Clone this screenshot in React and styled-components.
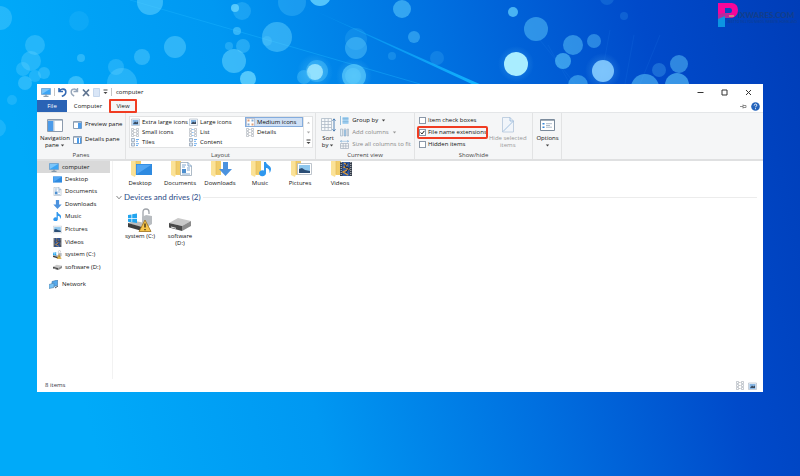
import React, { useState } from "react";
import styled, { createGlobalStyle, css } from "styled-components";

const GlobalStyle = createGlobalStyle`
  *, *::before, *::after { box-sizing: border-box; }
  body { margin: 0; font: 6px/7px "Open Sans", "Noto Sans", sans-serif; color: #111; }
  button, input { font: inherit; color: inherit; margin: 0; }
  button { border: 0; padding: 0; background: none; cursor: pointer; }
  ul { list-style: none; margin: 0; padding: 0; }
  a { color: inherit; text-decoration: none; }
  h1, h2, h3 { margin: 0; font: inherit; }
  svg { display: block; flex: none; }
`;

const Desktop = styled.div`
  position: relative;
  min-height: 100vh;
  padding: 84px 37px;
  display: flex;
  flex-direction: column;
`;
const WallpaperSvg = styled.svg`
  position: absolute;
  inset: 0;
  width: 100%;
  height: 100%;
`;
const Brand = styled.a`
  position: absolute;
  top: 3px;
  right: 3px;
  display: flex;
  color: #123e8c;
`;
const BrandText = styled.span`
  display: flex;
  flex-direction: column;
  margin: 7px 0 0 -10px;
`;
const BrandName = styled.span`
  padding-left: 10px;
  font: 900 8px/10px Lato, sans-serif;
`;
const BrandTag = styled.span`
  font: 400 3px/5px Lato, sans-serif;
  white-space: nowrap;
`;
const Window = styled.main`
  position: relative;
  flex: 1;
  display: flex;
  flex-direction: column;
  background: #fff;
`;
const TitleBar = styled.header`
  display: flex;
  align-items: center;
  height: 16px;
  padding: 0 11px 0 4px;
`;
const QuickAccess = styled.div`
  display: flex;
  align-items: center;
  gap: 3px;
`;
const Separator = styled.span`
  width: 1px;
  height: 8px;
  background: #c4c4c4;
`;
const Title = styled.h1`
  margin-left: 4px;
  color: #111;
`;
const WindowControls = styled.div`
  display: flex;
  gap: 17px;
  margin-left: auto;
`;
const TabBar = styled.nav`
  display: flex;
  align-items: center;
  height: 12px;
  padding-right: 3px;
`;
const Tab = styled.button`
  width: ${(p) => p.$width}px;
  height: 12px;
  ${(p) => p.$file && css`background: #2a63b5; color: #fff;`}
  ${(p) => p.$marked && css`
    height: 14px;
    background: #f5f6f7;
    border: 2px solid #f03c22;
    border-radius: 1px;
    z-index: 1;
  `}
`;
const TabTools = styled.div`
  display: flex;
  align-items: center;
  gap: 4px;
  margin-left: auto;
`;
const Ribbon = styled.section`
  display: flex;
  height: 49px;
  background: #f5f6f7;
  border-top: 1px solid #e4e6e8;
  border-bottom: 2px solid #dfe0e1;
`;
const Group = styled.section`
  display: flex;
  flex-direction: column;
  width: ${(p) => p.$width}px;
  padding: 2px 3px 0;
  border-right: 1px solid #e2e3e4;
`;
const GroupBody = styled.div`
  display: flex;
  flex: 1;
  gap: 3px;
`;
const GroupTitle = styled.h2`
  height: 7px;
  text-align: center;
  color: #444;
`;
const BigButton = styled.button`
  display: flex;
  flex-direction: column;
  align-items: center;
  align-self: flex-start;
  gap: 2px;
  width: ${(p) => p.$width}px;
  padding-top: 2px;
  color: ${(p) => (p.disabled ? "#999" : "#111")};
  white-space: nowrap;
`;
const IconBox = styled.span`
  display: flex;
  align-items: center;
  height: 16px;
`;
const Column = styled.div`
  display: flex;
  flex-direction: column;
  gap: ${(p) => p.$gap}px;
  padding-top: ${(p) => p.$top}px;
`;
const SmallButton = styled.button`
  display: flex;
  align-items: center;
  gap: 3px;
  height: 9px;
  white-space: nowrap;
  color: ${(p) => (p.disabled ? "#888" : "#111")};
`;
const Gallery = styled.div`
  display: grid;
  grid-template-columns: 58px 57px 58px 9px;
  flex: 1;
  margin-top: 1px;
  height: 32px;
  background: #fff;
  border: 1px solid #e2e3e4;
`;
const GalleryColumn = styled.div`
  display: flex;
  flex-direction: column;
`;
const GalleryItem = styled.button`
  display: flex;
  align-items: center;
  gap: 2px;
  height: 10px;
  padding: 0 1px;
  white-space: nowrap;
  ${(p) => p.$selected && css`background: #cfe0f5; outline: 1px solid #84acdd; outline-offset: -1px;`}
`;
const Scroller = styled.div`
  display: flex;
  flex-direction: column;
  border-left: 1px solid #e2e3e4;
`;
const ScrollButton = styled.button`
  display: grid;
  place-items: center;
  height: 10px;
`;
const CheckLabel = styled.label`
  display: flex;
  align-items: center;
  gap: 2px;
  height: 11px;
  padding-left: 1px;
  white-space: nowrap;
  ${(p) => p.$marked && css`
    outline: 2px solid #f03c22;
    outline-offset: -1px;
    border-radius: 1px;
  `}
`;
const Check = styled.input`
  appearance: none;
  width: 7px;
  height: 7px;
  background: #fff;
  border: 1px solid #8b98a8;
  &:checked {
    background: #fff url("data:image/svg+xml,%3Csvg xmlns='http://www.w3.org/2000/svg' viewBox='0 0 6 6'%3E%3Cpath d='M.8 3l1.6 1.7L5.3 1' fill='none' stroke='%23111' stroke-width='1.2'/%3E%3C/svg%3E");
  }
`;
const Body = styled.div`
  display: flex;
  flex: 1;
`;
const Sidebar = styled.nav`
  width: 76px;
  border-right: 1px solid #f2f2f2;
`;
const NavList = styled.ul`
  display: grid;
  grid-auto-rows: 1fr;
  height: 101px;
`;
const NavLink = styled.a`
  display: flex;
  align-items: center;
  gap: 3px;
  height: 12px;
  margin-right: 2px;
  padding-left: ${(p) => (p.$root ? 12 : 16)}px;
  ${(p) => p.$selected && css`background: #d9d9d9;`}
`;
const NetworkRow = styled.div`
  padding-top: 4px;
`;
const Content = styled.div`
  flex: 1;
  padding: 0 6px 0 3px;
`;
const Tiles = styled.ul`
  display: flex;
  padding-left: 4px;
`;
const Tile = styled.li`
  width: 40px;
`;
const TileLink = styled.a`
  display: flex;
  flex-direction: column;
  align-items: center;
  gap: ${(p) => p.$gap}px;
  text-align: center;
`;
const TileName = styled.span`
  width: ${(p) => (p.$narrow ? "30px" : "auto")};
  white-space: ${(p) => (p.$narrow ? "normal" : "nowrap")};
`;
const SectionHead = styled.h3`
  display: flex;
  align-items: center;
  gap: 2px;
  height: 10px;
  margin: 5px 0 6px;
  font: 8px/10px Lato, sans-serif;
  color: #2a4a86;
  &::after { content: ""; flex: 1; height: 1px; background: #ececec; }
`;
const StatusBar = styled.footer`
  display: flex;
  align-items: center;
  height: 13px;
  padding: 0 6px 0 8px;
  color: #334;
`;
const ViewSwitch = styled.div`
  display: flex;
  gap: 3px;
  margin-left: auto;
`;

/* x, y, radius, opacity, fill */
const lights = [
  [0, 18, 12, 0.35], [79, 21, 10, 0.12], [35, 45, 10, 0.35], [31, 61, 10, 0.35], [23, 69, 7, 0.3],
  [44, 73, 6, 0.35], [35, 76, 6, 0.3], [25, 83, 7, 0.4], [81, 58, 4, 0.4], [150, 2, 13, 0.5],
  [142, 57, 8, 0.4], [175, 47, 11, 0.45], [116, 67, 8, 0.3], [122, 83, 15, 0.35], [76, 84, 8, 0.5],
  [235, 8, 4, 0.8], [242, 11, 9, 0.25], [237, 31, 4, 0.5], [229, 46, 4, 0.3], [243, 46, 7, 0.35],
  [234, 61, 12, 0.55], [248, 79, 8, 0.8], [277, 37, 15, 0.45], [267, 41, 5, 0.25], [292, 2, 14, 0.25],
  [320, -5, 11, 0.8], [356, 39, 11, 0.15], [356, 48, 11, 0.4], [315, 72, 8, 0.9, "#b8f0ff"],
  [317, 71, 11, 0.35], [304, 77, 7, 0.35], [354, 76, 12, 0.6], [353, 76, 8, 0.35], [392, 56, 4, 0.2],
  [402, 9, 9, 0.5], [414, 37, 6, 0.4], [437, 58, 7, 0.16], [513, 12, 5, 0.7], [536, 29, 12, 0.45],
  [573, 45, 10, 0.45], [594, 41, 7, 0.4], [563, 61, 8, 0.55], [516, 64, 12, 1, "#a9edff"],
  [603, 71, 11, 0.9, "#86ccff"], [578, 85, 10, 0.45], [645, 88, 14, 0.5], [659, 70, 7, 0.25],
  [679, 64, 9, 0.45], [677, 85, 12, 0.55], [607, -2, 7, 0.15], [624, 16, 4, 0.15], [12, 100, 5, 0.25], [-3, 128, 9, 0.25],
];

const Wallpaper = () => (
  <WallpaperSvg viewBox="0 0 800 476" preserveAspectRatio="none" aria-hidden="true">
    <defs>
      <linearGradient id="sky" x1="0" y1="0.15" x2="1" y2="0">
        <stop offset="0" stopColor="#00aaf9" />
        <stop offset="0.28" stopColor="#0098f2" />
        <stop offset="0.55" stopColor="#0070e0" />
        <stop offset="0.8" stopColor="#004aca" />
        <stop offset="1" stopColor="#003db8" />
      </linearGradient>
      <linearGradient id="beam">
        <stop offset="0" stopColor="#12b4ff" stopOpacity="0.1" />
        <stop offset="1" stopColor="#12b4ff" />
      </linearGradient>
      <radialGradient id="glow">
        <stop offset="0" stopColor="#8fe6ff" stopOpacity="0.3" />
        <stop offset="1" stopColor="#8fe6ff" stopOpacity="0" />
      </radialGradient>
    </defs>
    <rect width="800" height="476" fill="url(#sky)" />
    <path d="M130 0L420 84" stroke="#1cb6ff" strokeOpacity=".4" fill="none" />
    <path d="M296 2L304 6L484 86L476 86z" fill="url(#beam)" />
    <g stroke="#2a86ee" strokeOpacity=".15">
      <path d="M540 40L575 84M600 84L610 30M625 84L634 35M640 84L660 35M570 84L548 45" />
    </g>
    {[[516, 64], [603, 71], [315, 72], [354, 76]].map(([x, y]) => (
      <circle key={x} cx={x} cy={y} r="18" fill="url(#glow)" />
    ))}
    {lights.map(([x, y, r, o, fill = "#68d5ff"], i) => (
      <circle key={i} cx={x} cy={y} r={r} fill={fill} fillOpacity={o} />
    ))}
  </WallpaperSvg>
);

const Svg = ({ w = 9, h = 9, box = `0 0 ${w} ${h}`, children }) => (
  <svg width={w} height={h} viewBox={box} fill="none" aria-hidden="true">{children}</svg>
);
const Monitor = () => (
  <Svg w={10} h={9}>
    <path d="M.5.5h9v6h-9z" fill="#3ba5f5" stroke="#6b9cc8" strokeWidth=".7" />
    <path d="M1 1h8L1 6z" fill="#7cc6fa" />
    <path d="M5 6.5V8M2.5 8.3h5" stroke="#71889c" />
  </Svg>
);
const Caret = ({ color = "#444" }) => <Svg w={5} h={3}><path d="M.8.5h3.4L2.5 2.6z" fill={color} /></Svg>;
const CaretInline = styled.span`
  display: inline-block;
  vertical-align: middle;
  margin-left: 1px;
`;

const PaneIcon = ({ right }) => (
  <Svg w={9} h={8}>
    <path d="M.5.5h8v7h-8z" fill="#fff" stroke="#8a9cb0" />
    <path d={right ? "M5 1.5h3.5v6H5z" : "M4 1.5h2v6H4zM7 1.5h1v6H7z"} fill="#4b9bea" />
    <path d="M1 1.3h7" stroke="#a4b4c6" />
  </Svg>
);
const ImageIcon = ({ small }) => (
  <Svg w={9} h={8}>
    <path d="M.5 1h8v6.5h-8z" fill="#f4f8fc" stroke="#b3bdc8" strokeWidth=".7" />
    <path d={small ? "M2 2h5v4H2z" : "M1.5 2h6v5h-6z"} fill="#84b5e4" />
    <path d="M2 6l2-2.4 1.4 1 1.6-1V6z" fill="#3b4a5e" />
  </Svg>
);
const DotsIcon = ({ blue }) => (
  <Svg w={9} h={9}>
    <path d="M.5.5h2v2h-2zM.5 3.5h2v2h-2zM.5 6.5h2v2h-2zM5.5.5h2v2h-2zM5.5 3.5h2v2h-2zM5.5 6.5h2v2h-2z" stroke="#a2a9b2" strokeWidth=".6" />
    <path d="M3.4 1.5h1M3.4 4.5h1M3.4 7.5h1" stroke={blue ? "#4b9bea" : "#a8a8a8"} />
  </Svg>
);
const TileIcon = () => (
  <Svg>
    <path d="M.5.5h3v3h-3zM.5 5h3v3h-3z" fill="#dbe9f7" stroke="#8c9bad" strokeWidth=".7" />
    <path d="M5 1.5h3M5 3.3h2M5 5.7h3M5 7.5h2" stroke="#4b9bea" strokeWidth=".8" />
  </Svg>
);
const MediumIcon = () => (
  <Svg>
    <path d="M.5.5h8v8h-8z" fill="#fff" stroke="#aab" strokeWidth=".6" />
    <path d="M1.5 1.5h2v2h-2zM5.5 5.5h2v2h-2z" fill="#df9e76" />
    <path d="M5.5 1.5h2v2h-2zM1.5 5.5h2v2h-2z" fill="#83abd4" />
  </Svg>
);
const GridIcon = () => (
  <Svg w={15} h={16}>
    <path d="M.5 1.5h10v12H.5zM.5 4.5h10M.5 7.5h10M.5 10.5h10M3.8 1.5v12M7.2 1.5v12" fill="#f8fafc" stroke="#afbac6" strokeWidth=".8" />
    <path d="M13 2v12M11.5 3.7L13 1.8l1.5 1.9M11.5 12.3L13 14.2l1.5-1.9" stroke="#3f74ad" strokeWidth=".9" />
  </Svg>
);
const ColumnsIcon = ({ kind }) => (
  <Svg w={9} h={9}>
    {kind === "group" && <><path d="M2.5 1h6v7h-6z" fill="#a6d2f1" /><path d="M.5 0v9M2.5 2.8h6M2.5 5.8h6" stroke="#6da9d3" strokeWidth=".7" /></>}
    {kind === "add" && <><path d="M.5 1h2v7h-2zM4 1h2v7H4zM7.3 1h1.2v7H7.3z" fill="#e3edf5" stroke="#97aabc" strokeWidth=".6" /><path d="M5 2v6" stroke="#68a5d5" /></>}
    {kind === "size" && <><path d="M.5 3.5h8v5h-8zM.5 6h8M3.2 3.5v5M5.8 3.5v5" stroke="#a4afbc" strokeWidth=".7" /><path d="M0 1.3h9M2 .3l-1.6 1L2 2.3M7 .3l1.6 1L7 2.3" stroke="#81b0d6" strokeWidth=".6" /></>}
  </Svg>
);
const HideIcon = () => (
  <Svg w={12} h={16}>
    <path d="M.5.5h7.5l3.5 3.5v11H.5z" fill="#f1f5fa" stroke="#b4c7db" strokeWidth=".8" />
    <path d="M8 .5V4h3.5M1 14.5L11 4.5" stroke="#8fb3d8" strokeWidth=".8" />
  </Svg>
);
const OptionsIcon = () => (
  <Svg w={15} h={12}>
    <path d="M.5.5h14v11H.5z" fill="#fff" stroke="#7b8b9c" />
    <path d="M1 1.5h13" stroke="#a2adb8" />
    <path d="M2.5 4h2v1.5h-2zM2.5 7.5h2V9h-2z" fill="#3686d8" />
    <path d="M6 4.7h6M6 8.2h6M6 6.5h4" stroke="#9ab" strokeWidth=".8" />
  </Svg>
);
const NavigationIcon = () => (
  <Svg w={16} h={13}>
    <path d="M.5.5h15v12H.5z" fill="#fff" stroke="#8c9bad" />
    <path d="M1 2h5.5v10H1z" fill="#4b9bea" />
    <path d="M1 1.5h14M7 2v10" stroke="#b8c4d0" />
  </Svg>
);

const Film = () => (
  <>
    <path d="M0 0h12v14H0z" fill="#333b48" />
    <path d="M2.5 0h7v14h-7z" fill="#315ba4" />
    <path d="M4 1l3 2-3 2 5 2-6 3 5 3" stroke="#e39a31" strokeWidth="1.2" />
    <path d="M7 1l-2 4 4 1-3 5" stroke="#142748" />
    <path d="M1.2 0v14M10.8 0v14" stroke="#c8ccd0" strokeDasharray="1 1" />
  </>
);
const Doc = () => (
  <>
    <path d="M.5.5H8L11.5 4v9.5H.5z" fill="#fff" stroke="#99a9b9" strokeWidth=".8" />
    <path d="M8 .5V4h3.5M2 3h4M2 5h3M7 6h3M7 8h3M2 12h8" stroke="#6d9ccb" strokeWidth=".9" />
    <path d="M2 7h4v4H2z" fill="#4c8ecf" />
  </>
);
const Arrow = () => <path d="M4 0h5v7h4L6.5 14 0 7h4z" fill="#4b92de" />;
const Note = () => <path d="M5 0h2c0 3 5 3.500 5 7 0 1.500-.7 3-1.500 4C11 7.500 9 6 7 6v5a3.500 3 0 1 1-2-2.500z" fill="#2f97ee" />;
const Photo = () => (
  <>
    <path d="M.5 1.500h14v11H.5z" fill="#fff" stroke="#adb6bf" strokeWidth=".8" />
    <path d="M2 3h11v8H2z" fill="#8ec7ee" />
    <path d="M2 7l3-1 3 2 5 1v2H2z" fill="#2c4e75" />
  </>
);
const Screen = () => (
  <>
    <path d="M0 2h16v11H0z" fill="#2e8ae0" />
    <path d="M.7 2.700h14.600L.7 12.300z" fill="#52a6f3" />
  </>
);
const DriveShape = () => (
  <>
    <path d="M0 5L9 0l13 3-9 5z" fill="#c9c9c9" />
    <path d="M0 5l13 3v5L0 9.500z" fill="#4a4a4a" />
    <path d="M13 8l9-5v5l-9 5z" fill="#8c8c8c" />
    <path d="M2 9l5 1.300" stroke="#e6e6e6" />
  </>
);
const SystemShape = () => (
  <>
    <path d="M15 9V4q0-3 3-3t3 3v2" stroke="#9fa4aa" strokeWidth="1.300" />
    <path d="M14 9l4-2 6 1v8l-5 3-5-2z" fill="#b8bcc0" />
    <g transform="translate(0 12)"><path d="M0 3l7-2 10 2-5 4z" fill="#bdbdbd" /><path d="M0 3l14 4v4L0 7z" fill="#3f3f3f" /></g>
    <path d="M0 7l3.500-.6V10H0zM4.200 6.200L9 5.500V10H4.200zM0 10.700h3.500v3.500L0 13.700zM4.200 10.700H9V15l-4.800-.7z" fill="#22a5ef" />
    <path d="M17 12l6 11.500H11z" fill="#f7c64d" stroke="#9b6d18" strokeWidth=".8" strokeLinejoin="round" />
    <path d="M17 15.500v4M17 21v1.300" stroke="#2d2411" strokeWidth="1.300" />
  </>
);
const shapes = {
  Desktop: [Screen, 16, 15], Documents: [Doc, 12, 14], Downloads: [Arrow, 13, 14],
  Music: [Note, 13, 14], Pictures: [Photo, 15, 14], Videos: [Film, 12, 14],
  "system (C:)": [SystemShape, 25, 24], "software (D:)": [DriveShape, 22, 14],
};
const NavIcon = ({ name }) => {
  const [Shape, w, h] = shapes[name];
  return <Svg w={9} h={9} box={`0 0 ${w} ${h}`}><Shape /></Svg>;
};
const FolderIcon = ({ name }) => {
  const [Shape, w] = shapes[name];
  return (
    <Svg w={24} h={17}>
      <path d="M3 0h10v14H5l-2-1z" fill="#f0cc69" />
      <path d="M3 0h5v13l-1 3-4-2z" fill="#fbe297" />
      <path d="M8 0v13" stroke="#e3ba58" strokeWidth=".6" />
      <g transform={`translate(${24 - w} 1)`}><Shape /></g>
    </Svg>
  );
};

const layouts = [
  [["Extra large icons", <ImageIcon />], ["Small icons", <DotsIcon />], ["Tiles", <TileIcon />]],
  [["Large icons", <ImageIcon small />], ["List", <DotsIcon blue />], ["Content", <TileIcon />]],
  [["Medium icons", <MediumIcon />], ["Details", <DotsIcon />]],
];
const folders = ["Desktop", "Documents", "Downloads", "Music", "Pictures", "Videos"];
const drives = ["system (C:)", "software (D:)"];

function Toolbar() {
  return (
    <TitleBar>
      <QuickAccess>
        <Monitor />
        <Separator />
        <button aria-label="Undo"><Svg w={9} h={10}><path d="M1 1v3.500h4M1.300 4.200C3 1 8 1.500 7.800 5c0 2-1.500 3.500-4 4.300" stroke="#3469b4" strokeWidth="1.600" /></Svg></button>
        <button aria-label="Redo"><Svg w={9} h={10}><path d="M7.500 1v3.500h-4M7.200 4.200C6 1 1 1.500 1.200 5c0 2 1 3.200 3 4" stroke="#96a6ba" strokeWidth="1.400" /></Svg></button>
        <button aria-label="Delete"><Svg w={8} h={9}><path d="M1 1.500l6 6.500M7 1.500L1 8" stroke="#5f7490" strokeWidth="1.700" /></Svg></button>
        <button aria-label="Properties"><Svg w={7} h={9}><path d="M.5.5h6v8h-6z" fill="#d9e6f7" stroke="#c5d6ec" /></Svg></button>
        <button aria-label="Customize toolbar"><Svg w={5} h={6}><path d="M.5 1h4" stroke="#444" /><path d="M.5 3h4L2.500 5z" fill="#444" /></Svg></button>
        <Separator />
      </QuickAccess>
      <Title>computer</Title>
      <WindowControls>
        <button aria-label="Minimize"><Svg w={7} h={7}><path d="M.5 3.500h6" stroke="#333" /></Svg></button>
        <button aria-label="Maximize"><Svg w={7} h={7}><path d="M1 1h5v5H1z" stroke="#333" /></Svg></button>
        <button aria-label="Close"><Svg w={7} h={7}><path d="M1 1l5 5M6 1L1 6" stroke="#333" /></Svg></button>
      </WindowControls>
    </TitleBar>
  );
}

function ViewRibbon() {
  const [layout, setLayout] = useState("Medium icons");
  return (
    <Ribbon>
      <Group $width={89}>
        <GroupBody>
          <BigButton $width={32}>
            <IconBox><NavigationIcon /></IconBox>
            <span>Navigation<br />pane<CaretInline><Caret /></CaretInline></span>
          </BigButton>
          <Column $top={5} $gap={6}>
            <SmallButton><PaneIcon right />Preview pane</SmallButton>
            <SmallButton><PaneIcon />Details pane</SmallButton>
          </Column>
        </GroupBody>
        <GroupTitle>Panes</GroupTitle>
      </Group>
      <Group $width={190}>
        <GroupBody>
          <Gallery>
            {layouts.map((column, i) => (
              <GalleryColumn key={i}>
                {column.map(([name, icon]) => (
                  <GalleryItem key={name} $selected={name === layout} onClick={() => setLayout(name)}>
                    {icon}{name}
                  </GalleryItem>
                ))}
              </GalleryColumn>
            ))}
            <Scroller>
              <ScrollButton aria-label="Scroll up"><Svg w={5} h={3}><path d="M1 2.500h3L2.500.7z" fill="#aaa" /></Svg></ScrollButton>
              <ScrollButton aria-label="Scroll down"><Caret color="#aaa" /></ScrollButton>
              <ScrollButton aria-label="More layouts"><Svg w={5} h={6}><path d="M.5 1h4" stroke="#444" /><path d="M.5 3h4L2.500 5z" fill="#444" /></Svg></ScrollButton>
            </Scroller>
          </Gallery>
        </GroupBody>
        <GroupTitle>Layout</GroupTitle>
      </Group>
      <Group $width={99}>
        <GroupBody>
          <BigButton $width={20}>
            <IconBox><GridIcon /></IconBox>
            <span>Sort<br />by<CaretInline><Caret /></CaretInline></span>
          </BigButton>
          <Column $top={1} $gap={3}>
            <SmallButton><ColumnsIcon kind="group" />Group by<Caret /></SmallButton>
            <SmallButton disabled><ColumnsIcon kind="add" />Add columns<Caret color="#999" /></SmallButton>
            <SmallButton disabled><ColumnsIcon kind="size" />Size all columns to fit</SmallButton>
          </Column>
        </GroupBody>
        <GroupTitle>Current view</GroupTitle>
      </Group>
      <Group $width={118}>
        <GroupBody>
          <Column $top={0} $gap={1}>
            <CheckLabel><Check type="checkbox" />Item check boxes</CheckLabel>
            <CheckLabel $marked><Check type="checkbox" defaultChecked />File name extensions</CheckLabel>
            <CheckLabel><Check type="checkbox" />Hidden items</CheckLabel>
          </Column>
          <BigButton $width={36} disabled>
            <IconBox><HideIcon /></IconBox>
            <span>Hide selected<br />items</span>
          </BigButton>
        </GroupBody>
        <GroupTitle>Show/hide</GroupTitle>
      </Group>
      <Group $width={29}>
        <BigButton $width={23}>
          <IconBox><OptionsIcon /></IconBox>
          <span>Options</span>
          <Caret />
        </BigButton>
      </Group>
    </Ribbon>
  );
}

function NavPane() {
  return (
    <Sidebar aria-label="Folders">
      <NavLink href="#computer" $root $selected><Monitor />computer</NavLink>
      <NavList>
        {[...folders, ...drives].map((name) => (
          <li key={name}><NavLink href="#folder"><NavIcon name={name} />{name}</NavLink></li>
        ))}
      </NavList>
      <NetworkRow>
        <NavLink href="#network" $root>
          <Svg w={10} h={9}>
            <path d="M3 1.500L8.500 0v5.500L3 7z" fill="#54a9ed" stroke="#356fa5" strokeWidth=".6" />
            <path d="M0 4.500L5 3v4.500L0 8.500z" fill="#7ac4f5" stroke="#527fa7" strokeWidth=".6" />
            <path d="M6 8l3-2" stroke="#456" />
          </Svg>
          Network
        </NavLink>
      </NetworkRow>
    </Sidebar>
  );
}

export default function App() {
  return (
    <Desktop>
      <GlobalStyle />
      <Wallpaper />
      <Brand href="#home">
        <Svg w={20} h={25}>
          <path d="M0 0h14q6 1 6 7t-6 8H7v1H0z" fill="#f6059a" />
          <path d="M7 5h5q2 0 2 2.500T12 10H7z" fill="#0848c3" />
          <path d="M0 11l7-1 5 1 2 4H7v1H0z" fill="#b32a9e" />
          <path d="M0 16l7-3v11H0z" fill="#0c95e2" />
          <path d="M11 12h5v2h-5z" fill="#ce7f83" />
        </Svg>
        <BrandText>
          <BrandName>IXWARES.COM</BrandName>
          <BrandTag>BEST TO TELL YOU NEEDS, WEBSITE, HOMELAND</BrandTag>
        </BrandText>
      </Brand>
      <Window>
        <Toolbar />
        <TabBar>
          <Tab $width={30} $file>File</Tab>
          <Tab $width={42}>Computer</Tab>
          <Tab $width={28} $marked>View</Tab>
          <TabTools>
            <button aria-label="Pin ribbon"><Svg w={7} h={5}><path d="M0 2.500h3M3 .5v4M3 1.500h3v2H3" stroke="#777" strokeWidth=".8" /></Svg></button>
            <button aria-label="Help">
              <Svg><circle cx="4.5" cy="4.500" r="4.300" fill="#2464bb" /><path d="M3.200 3.500c.1-2 2.800-1.700 2.600-.2-.1.800-1.200.9-1.200 2M4.500 6.200v1" stroke="#fff" strokeWidth=".9" /></Svg>
            </button>
          </TabTools>
        </TabBar>
        <ViewRibbon />
        <Body>
          <NavPane />
          <Content>
            <Tiles>
              {folders.map((name) => (
                <Tile key={name}><TileLink href="#folder" $gap={2}><FolderIcon name={name} /><TileName>{name}</TileName></TileLink></Tile>
              ))}
            </Tiles>
            <SectionHead>
              <Svg w={6} h={5}><path d="M.5 1L3 3.800 5.500 1" stroke="#666" strokeWidth=".8" /></Svg>
              Devices and drives (2)
            </SectionHead>
            <Tiles>
              {drives.map((name, i) => (
                <Tile key={name}>
                  <TileLink href="#drive" $gap={1}>
                    {i === 0 ? <Svg w={25} h={24}><SystemShape /></Svg> : <Svg w={22} h={24} box="0 -10 22 24"><DriveShape /></Svg>}
                    <TileName $narrow={i === 1}>{name}</TileName>
                  </TileLink>
                </Tile>
              ))}
            </Tiles>
          </Content>
        </Body>
        <StatusBar>
          8 items
          <ViewSwitch>
            <button aria-label="Details view"><DotsIcon /></button>
            <button aria-label="Large icons view"><ImageIcon /></button>
          </ViewSwitch>
        </StatusBar>
      </Window>
    </Desktop>
  );
}
